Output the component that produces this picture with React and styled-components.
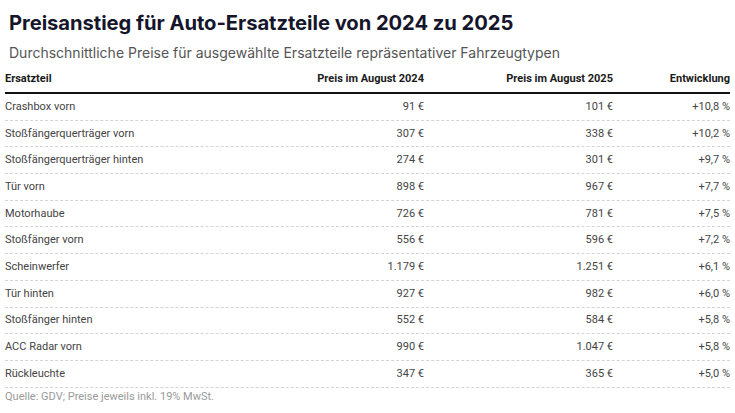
import React from "react";
import styled, { createGlobalStyle } from "styled-components";

const Global = createGlobalStyle`
  html, body { margin: 0; padding: 0; background: #fff; }
  body { font-family: Inter, "Liberation Sans", sans-serif; }
`;

const Page = styled.div`
  width: 735px;
  height: 413px;
  box-sizing: border-box;
  padding: 9px 5px 0 5px;
  background: #fff;
  overflow: hidden;
`;

const Title = styled.h1`
  margin: 0 0 0 4px;
  font-size: 20.2px;
  line-height: 28px;
  font-weight: 700;
  color: #15152b;
  letter-spacing: -0.05px;
`;

const Subtitle = styled.p`
  margin: 6px 0 0 4px;
  font-size: 14px;
  line-height: 20px;
  font-weight: 400;
  color: #555;
`;

const Table = styled.div`
  margin-top: 6px;
  width: 725px;
  font-family: Roboto, "Liberation Sans", sans-serif;
`;

const Row = styled.div`
  display: grid;
  grid-template-columns: 246px 173px 189px 117px;
  align-items: center;
  height: ${(p) => (p.$head ? "20px" : "25.7px")};
  border-bottom: ${(p) => (p.$head ? "2px solid #111" : "1px dashed #d4d4d4")};
  padding-bottom: ${(p) => (p.$head ? "3px" : "0")};
`;

const Cell = styled.div`
  font-size: 11px;
  line-height: 14px;
  white-space: nowrap;
  text-align: ${(p) => (p.$right ? "right" : "left")};
  font-weight: ${(p) => (p.$head ? 700 : 400)};
  color: ${(p) => (p.$head ? "#1a1a1a" : "#444")};
`;

const Footer = styled.div`
  margin-top: 2px;
  font-family: Roboto, "Liberation Sans", sans-serif;
  font-size: 11px;
  line-height: 14px;
  color: #9a9a9a;
`;

const data = [
  ["Crashbox vorn", "91 €", "101 €", "+10,8 %"],
  ["Stoßfängerquerträger vorn", "307 €", "338 €", "+10,2 %"],
  ["Stoßfängerquerträger hinten", "274 €", "301 €", "+9,7 %"],
  ["Tür vorn", "898 €", "967 €", "+7,7 %"],
  ["Motorhaube", "726 €", "781 €", "+7,5 %"],
  ["Stoßfänger vorn", "556 €", "596 €", "+7,2 %"],
  ["Scheinwerfer", "1.179 €", "1.251 €", "+6,1 %"],
  ["Tür hinten", "927 €", "982 €", "+6,0 %"],
  ["Stoßfänger hinten", "552 €", "584 €", "+5,8 %"],
  ["ACC Radar vorn", "990 €", "1.047 €", "+5,8 %"],
  ["Rückleuchte", "347 €", "365 €", "+5,0 %"],
];

export default function App() {
  return (
    <Page>
      <Global />
      <Title>Preisanstieg für Auto-Ersatzteile von 2024 zu 2025</Title>
      <Subtitle>
        Durchschnittliche Preise für ausgewählte Ersatzteile repräsentativer Fahrzeugtypen
      </Subtitle>
      <Table>
        <Row $head>
          <Cell $head>Ersatzteil</Cell>
          <Cell $head $right>Preis im August 2024</Cell>
          <Cell $head $right>Preis im August 2025</Cell>
          <Cell $head $right>Entwicklung</Cell>
        </Row>
        {data.map((r) => (
          <Row key={r[0]}>
            <Cell>{r[0]}</Cell>
            <Cell $right>{r[1]}</Cell>
            <Cell $right>{r[2]}</Cell>
            <Cell $right>{r[3]}</Cell>
          </Row>
        ))}
      </Table>
      <Footer>Quelle: GDV; Preise jeweils inkl. 19% MwSt.</Footer>
    </Page>
  );
}
